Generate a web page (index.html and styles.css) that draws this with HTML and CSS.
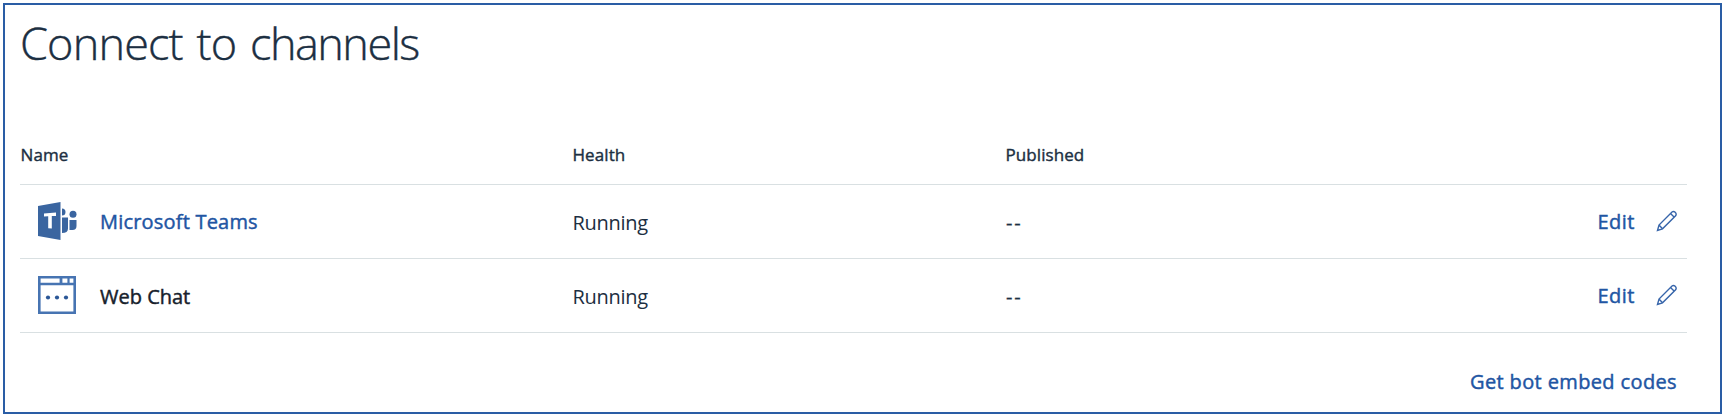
FILE: index.html
```html
<!DOCTYPE html>
<html lang="en">
<head>
<meta charset="utf-8">
<title>Connect to channels</title>
<link rel="stylesheet" href="styles.css">
</head>
<body>
<main class="panel">
  <h1 class="title">Connect to <span class="title-end">channels</span></h1>
  <div class="row head">
    <div class="label">Name</div>
    <div class="label">Health</div>
    <div class="label">Published</div>
  </div>
  <div class="row">
    <div class="channel">
      <svg class="icon" viewBox="0 0 42 42">
        <path fill="#3a65a0" d="M2 6 24.500 2v38L2 36z"/>
        <path fill="#fff" d="M8 13.500l12-1v3.400l-4.200.2v12.400l-3.600-.3V16.300l-4.200.2z"/>
        <path fill="#3a65a0" d="M26 8.500a3.500 3.500 0 0 1 0 7zM26 17.500h6v11q0 4.500-6 4.500zM33.500 20h7v6q0 4-4 4h-3z"/>
        <circle fill="#3a65a0" cx="37" cy="14.300" r="3.500"/>
      </svg>
      <a class="link teams">Microsoft Teams</a>
    </div>
    <div class="value">Running</div>
    <div class="value dashes">--</div>
    <div class="action"><a class="link edit">Edit</a>
      <svg class="pencil" viewBox="0 0 22 22"><path d="M1.500 20.500 3 15 16 2q1.500-1.200 3.200.3t.4 3.500L6.500 18.800zM3 15l3.500 3.800M14.500 3.500l3.800 3.800"/></svg>
    </div>
  </div>
  <div class="row">
    <div class="channel">
      <svg class="icon window" viewBox="0 0 42 42">
        <g fill="none" stroke="#4774b2" stroke-width="2.600"><path d="M3.300 3.300h35.400v35.400H3.300zM3.300 10h35.400"/><path stroke-width="2.200" d="M32.500 4v6"/><path stroke-width="2.800" d="M25 4v6"/></g>
        <g fill="#2b5797"><circle cx="12" cy="23.500" r="2.100"/><circle cx="21" cy="23.500" r="2.100"/><circle cx="30" cy="23.500" r="2.100"/></g>
      </svg>
      <span class="link web">Web Chat</span>
    </div>
    <div class="value">Running</div>
    <div class="value dashes">--</div>
    <div class="action"><a class="link edit">Edit</a>
      <svg class="pencil" viewBox="0 0 22 22"><path d="M1.500 20.500 3 15 16 2q1.500-1.200 3.200.3t.4 3.500L6.500 18.800zM3 15l3.500 3.800M14.500 3.500l3.800 3.800"/></svg>
    </div>
  </div>
  <footer class="footer"><a class="link embed">Get bot embed codes</a></footer>
</main>
</body>
</html>
```
FILE: styles.css
```css
* { box-sizing: border-box; }
body {
  margin: 0;
  padding: 3px;
  background: #fff;
  color: #1c2f42;
  font-family: "Open Sans", "Noto Sans", sans-serif;
}
.panel {
  width: 1719px;
  height: 411px;
  border: 2px solid #2a5da5;
  padding: 0 33px 0 15px;
}
.title {
  margin: 0;
  height: 106px;
  padding-top: 8px;
  font-size: 45px;
  line-height: 60px;
  font-weight: 300;
  letter-spacing: -0.82px;
  word-spacing: 2.8px;
  -webkit-text-stroke: 0.4px currentColor;
  white-space: nowrap;
}
.title-end { letter-spacing: -1.5px; }
.row {
  display: grid;
  grid-template-columns: 552px 433px 400px 1fr;
  height: 74px;
  align-items: center;
  border-bottom: 1px solid #d9e0e2;
}
.head { padding-top: 15px; }
.label {
  padding-left: 0.5px;
  font-size: 17px;
  line-height: 24px;
  letter-spacing: 0.08px;
  -webkit-text-stroke: 0.4px currentColor;
}
.channel { display: flex; align-items: center; }
.icon { width: 42px; height: 42px; margin: 0 22px 2px 16px; }
.link {
  color: #2155a3;
  font-size: 20px;
  line-height: 28px;
  white-space: nowrap;
  -webkit-text-stroke: 0.45px currentColor;
}
.teams { letter-spacing: 0.2px; }
.web { color: #17212c; padding-top: 2px; }
.edit { letter-spacing: 0.5px; }
.embed { letter-spacing: 0.37px; }
.value { font-size: 20px; line-height: 28px; padding: 3px 0 0 0.5px; letter-spacing: -0.3px; }
.dashes { letter-spacing: 1.7px; padding-left: 1px; -webkit-text-stroke: 0.3px currentColor; }
.action { display: flex; align-items: center; justify-content: flex-end; padding-right: 9px; }
.pencil { width: 22px; height: 22px; margin: 0 0 2px 21px; fill: none; stroke: #3765aa; stroke-width: 1.4; }
.footer { display: flex; justify-content: flex-end; padding: 35px 10px 0 0; }
```
